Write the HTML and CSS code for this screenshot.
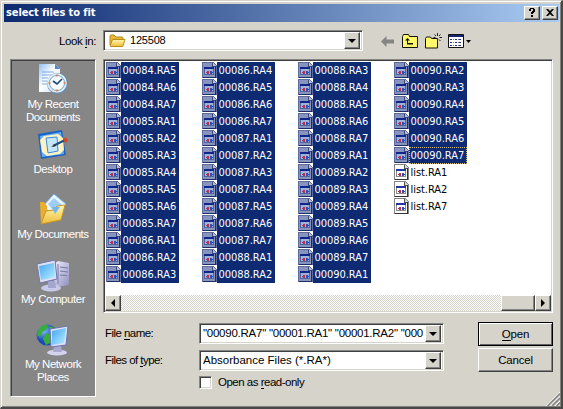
FILE: index.html
```html
<!DOCTYPE html>
<html lang="en">
<head>
<meta charset="utf-8">
<title>select files to fit</title>
<link rel="stylesheet" href="styles.css">
</head>
<body>
<svg class="defs" width="0" height="0" aria-hidden="true">
  <defs>
    <linearGradient id="gold" x1="0" y1="0" x2="0" y2="1"><stop offset="0" stop-color="#fff8b8"/><stop offset="1" stop-color="#eebc35"/></linearGradient>
    <linearGradient id="screen" x1="0" y1="0" x2="1" y2="1"><stop offset="0" stop-color="#46a5f5"/><stop offset="1" stop-color="#b5f0ff"/></linearGradient>
    <linearGradient id="paper" x1="0" y1="0" x2="1" y2="1"><stop offset="0" stop-color="#8fc0f4"/><stop offset=".45" stop-color="#fff"/><stop offset="1" stop-color="#c3defa"/></linearGradient>
    <radialGradient id="globe" cx=".35" cy=".3"><stop offset="0" stop-color="#7db8ff"/><stop offset="1" stop-color="#1747b8"/></radialGradient>
    <linearGradient id="case" x1="0" y1="0" x2="1" y2="1"><stop offset="0" stop-color="#f0f0fc"/><stop offset="1" stop-color="#8e8ebc"/></linearGradient>
    <symbol id="file" viewBox="0 0 15 17">
      <path class="sheet" d="M.5.5h10.500l3 3v12H.5z"/>
      <path class="fold" d="M10.500.500v3.500h3.500"/>
      <path class="edge" d="M13.500 4v11.500H.5"/>
      <path class="win" d="M2.500 5.500h9v7h-9z"/>
      <path class="bar" d="M2 5h10v2H2z"/>
      <path d="M4 10h1V9h2v3H5v-1H4z" fill="#b83050"/>
      <path d="M8 9h2v1h1v1h-1v1H8z" fill="#2452b8"/>
    </symbol>
  </defs>
</svg>
<main class="dialog">
  <header class="title"><span class="caption">select files to fit</span>
    <button class="tb">
      <svg width="14" height="12" viewBox="0 0 14 12"><path d="M4 2h1V1h4v1h1v3H9v1H8v1H6V5h1V4h1V2H6v2H4zM6 8h2v2H6z"/></svg></button>
    <button class="tb close">
      <svg width="14" height="12" viewBox="0 0 14 12"><path d="M3 2h2l2 2 2-2h2L8 5.500 11 9H9L7 7 5 9H3l3-3.500z"/></svg></button>
  </header>

  <div class="lookin">
    <label class="look-label">Look <u>i</u>n:</label>
    <div class="combo look">
      <svg class="folder" width="17" height="14" viewBox="0 0 17 14"><path d="M1 11V2q0-1 1-1h3l2 2h6q1 0 1 1v7z" fill="#e8b830" stroke="#b58a1e"/><path d="M3.500 5.500h12.500l-2.200 7H2q-1 0-.8-1z" fill="url(#gold)" stroke="#b88d20"/></svg>
      <span class="value">125508</span><span class="drop"></span>
    </div>
    <div class="tools">
      <svg width="13" height="11" viewBox="0 0 13 11"><path d="M0 5.500 5.500 0v3.500H13v4H5.500V11z" fill="#858585"/></svg>
      <svg width="16" height="14" viewBox="0 0 16 14"><path d="M.5 13.500v-11l1-2h5l1 2h8v11z" fill="#fff86a" stroke="#111"/><path d="M3 6.500 5.500 4 8 6.500H6V9h5v1.500H5v-4z" fill="#111"/></svg>
      <svg width="17" height="16" viewBox="0 0 17 16"><path d="M.5 15V5.500l1-1.500h4l1 1.500h6V15z" fill="#fff86a" stroke="#111"/><path d="M12.500 0v3M12.500 6v3M8.500 4.500h2M14.500 4.500H17M9.500 1.500l1.500 1.500M15.500 1.500 14 3M14 6.500 15.500 8" stroke="#222" fill="none"/></svg>
      <svg width="24" height="14" viewBox="0 0 24 14"><path d="M.5.5h15v13H.5z" fill="#fff" stroke="#111"/><path d="M1 1h14v2H1z" fill="#16246f"/><path d="M2 5h2v1H2zM7 5h2v1H7zM11 5h2v1h-2zM2 8h2v1H2zM7 8h2v1H7zM11 8h2v1h-2zM2 11h2v1H2zM7 11h2v1H7zM11 11h2v1h-2z" fill="#203090"/><path d="M5 5h1v1H5zM10 5h1v1h-1zM5 8h1v1H5zM10 8h1v1h-1zM5 11h1v1H5zM10 11h1v1h-1z" fill="#777"/><path d="M18 6h5l-2.500 3z" fill="#000"/></svg>
    </div>
  </div>

  <div class="body">
    <nav class="places">
      <a class="place recent">
        <svg width="32" height="32" viewBox="0 0 32 32"><path d="M2 1h16l5 5v23H2z" fill="url(#paper)"/><path d="M18 1v5h5z" fill="#4c87d2"/><path d="M5 9h12M5 12h10M5 15h6M5 18h5M5 21h5" stroke="#7ea9df"/><circle cx="20.500" cy="20.500" r="10.500" fill="#688aae"/><circle cx="20" cy="20" r="9.800" fill="#dcecf8"/><circle cx="20" cy="20" r="7.600" fill="#f5fbff" stroke="#7fa3c7"/><path d="m16 18 4 3 5-5" fill="none" stroke="#1c4a80" stroke-width="1.700"/><path d="M20 11.500v2M20 26.500v2M11.500 20h2M26.500 20h2" stroke="#e57936" stroke-width="1.500"/></svg>
        <span>My Recent<br>Documents</span></a>
      <a class="place desk">
        <svg width="32" height="32" viewBox="0 0 32 32"><path d="m1 5 24-4 4 25-25 4z" fill="#1c63c8"/><path d="m3 7 21-4 3 22-22 3z" fill="#63aef6"/><path d="m7 7 14-2 5 4 1 12-4 4-13 2-5-4L3 11z" fill="#fff3c1"/><path d="m9 9 11-1 1 14-10 2z" fill="#c6e6ff" stroke="#398bd9"/><path d="m16 17 12-6" stroke="#164f92" stroke-width="2"/><path d="m14 18 4-3 1 2z" fill="#333"/><path d="m27 12 3-2" stroke="#d54524" stroke-width="4"/></svg>
        <span>Desktop</span></a>
      <a class="place docs">
        <svg width="32" height="32" viewBox="0 0 32 32"><path d="m6 13 11-12 12 10-9 15z" fill="#eaf7ff" stroke="#72ade4"/><path d="m11 11 6-6 8 7-5 10z" fill="#9dcdf8"/><path d="M3 9h4l3 4v17l-6 1z" fill="#e9af2c"/><path d="m4 31 5-13 8-1 3-4 8-1-4 15z" fill="url(#gold)" stroke="#c8942a"/><path d="m15 14 8 0-5 7z" fill="#71b7f1"/></svg>
        <span>My Documents</span></a>
      <a class="place comp">
        <svg width="34" height="32" viewBox="0 0 34 32"><path d="m18 4 4-3 11 2v22l-12 2-3-5z" fill="url(#case)"/><path d="M22 4v20M24 7l8 1M24 11l8 1M24 15l7 .5" stroke="#7777a8"/><ellipse cx="15" cy="28" rx="10" ry="3.500" fill="#c9c9e9"/><path d="M12 21h7l1 7h-8z" fill="#a5a5cf"/><path d="m1 4 18-4 2 19-17 4z" fill="#dedff5" stroke="#7376ac"/><path d="m3 6 15-3 1 14-14 3z" fill="url(#screen)"/></svg>
        <span>My Computer</span></a>
      <a class="place net">
        <svg width="34" height="32" viewBox="0 0 34 32"><circle cx="11" cy="11" r="10.500" fill="url(#globe)"/><path d="M3 5q4-5 9-4l-2 5-4 2-2 5-3-2zM10 9l5 2-1 8-4 2-3-6zM14 2l5 2-2 5-4-2z" fill="#39ae35"/><ellipse cx="21" cy="28.500" rx="10" ry="3" fill="#d4d3ef"/><path d="M18 22h7l1 6h-9z" fill="#a9a9d2"/><path d="m14 5 18-3-2 19-15 2z" fill="#dce0f8" stroke="#6c72a9"/><path d="m16 7 14-3-2 15-12 2z" fill="url(#screen)"/></svg>
        <span>My Network<br>Places</span></a>
    </nav>

    <section class="right">
      <div class="list">
        <div class="columns" id="columns"></div>
        <div class="scroll"><button class="sb"><i class="tri left"></i></button><span class="track"></span><span class="thumb"></span><button class="sb"><i class="tri rgt"></i></button></div>
      </div>
      <div class="form">
        <div class="fields">
          <label>File <u>n</u>ame:</label>
          <div class="combo"><span class="value names">"00090.RA7" "00001.RA1" "00001.RA2" "000</span><span class="drop"></span></div>
          <label>Files of <u>t</u>ype:</label>
          <div class="combo"><span class="value">Absorbance Files (*.RA*)</span><span class="drop"></span></div>
        </div>
        <div class="actions"><button class="btn default"><span><u>O</u>pen</span></button><button class="btn">Cancel</button></div>
      </div>
      <label class="readonly"><span class="box"></span><span>Open as <u>r</u>ead-only</span></label>
    </section>
  </div>
  <svg class="grip" width="14" height="14" viewBox="0 0 14 14"><path d="M0 14 14 0M4.500 14 14 4.500M9 14l5-5" stroke="#fff"/><path d="M1.500 14 14 1.500M6 14l8-8M10.500 14l3.500-3.500" stroke="#858585" stroke-width="1.600"/></svg>
</main>
<script src="script.js"></script>
</body>
</html>
```
FILE: styles.css
```css
* { box-sizing: border-box; }
body { margin: 0; width: 563px; height: 409px; overflow: hidden; background: #d6d3cb; font: 11.5px/13px "Liberation Sans", Arial, sans-serif; color: #000; }
button { font: inherit; color: inherit; padding: 0; margin: 0; }
svg { display: block; flex: none; }
u { text-decoration: none; box-shadow: 0 1px #000; }
.defs { position: absolute; }
.dialog { position: relative; width: 563px; height: 409px; padding: 3px 2px 0 3px; background: #d6d3cb; border: 1px solid #d6d3cb; border-right: 2px solid #484848; border-bottom: 2px solid #484848; box-shadow: inset 1px 1px #fff, inset -1px -1px #85827c; }

.title { display: flex; align-items: center; height: 18px; width: 555px; padding-right: 1px; background: linear-gradient(90deg, #0d2a70, #a9cbf2); }
.caption { flex: 1; padding-left: 2px; font: bold 11px/16px "DejaVu Sans Condensed", "DejaVu Sans", sans-serif; letter-spacing: -.1px; color: #fff; }
.tb { width: 16px; height: 14px; background: #d6d3cb; border: 1px solid; border-color: #fff #404040 #404040 #fff; box-shadow: inset -1px -1px #858585; }
.close { margin-left: 2px; }

.lookin { display: flex; height: 37px; padding-top: 8px; }
.look-label { width: 99px; padding: 5px 7px 0 0; text-align: right; letter-spacing: -.4px; }
.combo { display: flex; align-items: center; height: 21px; padding: 2px; background: #fff; border: 1px solid; border-color: #858585 #fff #fff #858585; box-shadow: inset 1px 1px #404040, inset -1px -1px #d6d3cb; }
.look { width: 260px; }
.folder { margin-left: 3px; }
.value { flex: 1; min-width: 0; padding-left: 1px; overflow: hidden; white-space: nowrap; }
.look .value { padding-left: 4px; font-size: 11px; letter-spacing: -.2px; }
.drop { flex: none; display: grid; place-items: center; width: 16px; height: 17px; background: #d6d3cb; border: 1px solid; border-color: #fff #404040 #404040 #fff; box-shadow: inset -1px -1px #858585; }
.drop::after { content: ""; border: 4px solid transparent; border-top-color: #000; border-bottom: 0; }
.tools { display: flex; align-items: center; height: 22px; padding-left: 18px; gap: 7px; }
.tools svg:nth-child(1) { margin-right: 1px; }
.tools svg:nth-child(3) { margin-right: -1px; }

.body { display: flex; gap: 7px; padding-left: 6px; }
.places { display: flex; flex-direction: column; width: 86px; height: 338px; background: #868686; border: 1px solid; border-color: #858585 #fff #fff #858585; box-shadow: inset 1px 1px #404040; }
.place { display: flex; flex-direction: column; align-items: center; text-align: center; color: #fff; letter-spacing: -.45px; }
.place span { width: 100%; }
.recent { padding-top: 3px; height: 67px; }
.recent span { padding-top: 3px; }
.desk { height: 65px; padding-top: 2px; }
.desk span { padding-top: 2px; }
.docs { height: 67px; padding-top: 1px; }
.docs span { padding-top: 3px; }
.comp { height: 64px; padding-top: 1px; }
.comp span { padding-top: 1px; }
.net { padding-top: 1px; }
.net span { padding-top: 2px; }

.right { width: 450px; }
.list { height: 254px; background: #fff; border: 1px solid; border-color: #858585 #fff #fff #858585; box-shadow: inset 1px 1px #404040, inset -1px -1px #d6d3cb; padding: 1px; }
.columns { display: grid; grid-template-columns: repeat(4, 96px); height: 234px; padding: 1px 0 0 1px; font: 11px/17px "DejaVu Sans Condensed", "DejaVu Sans", sans-serif; letter-spacing: -.05px; }
.row { display: flex; height: 17px; }
.row svg { width: 15px; height: 17px; shape-rendering: crispEdges; }
.row span { padding: 0 2px 0 1.5px; height: 17px; white-space: nowrap; }
.selected span { width: 58px; color: #fff; background: #0d2a73; }
.focused span { outline: 1px dotted #d8bd6c; outline-offset: -1px; }
.sheet { fill: #fff; stroke: #858585; }
.fold { fill: #d5d5d5; stroke: #555; }
.edge { fill: none; stroke: #333; }
.win { fill: #fff; stroke: #8a8a8a; }
.bar { fill: #2436a0; }
.selected .sheet { fill: #8794bd; stroke: #5c6b99; }
.selected .fold { fill: #b4bddb; stroke: #3a4a80; }
.selected .edge { stroke: #1b2f66; }
.selected .win { fill: #a5b0d8; stroke: #5064a0; }
.selected .bar { fill: #10268c; }
.scroll { display: flex; height: 16px; }
.track { flex: 1; background: repeating-conic-gradient(#fff 0 25%, #d6d3cb 0 50%) 0 0 / 2px 2px; }
.sb, .thumb { background: #d6d3cb; border: 1px solid; border-color: #fff #404040 #404040 #fff; box-shadow: inset -1px -1px #858585; }
.sb { display: grid; place-items: center; width: 16px; }
.thumb { width: 34px; }
.tri { border: 4px solid transparent; }
.left { border-right-color: #000; border-left: 0; }
.rgt { border-left-color: #000; border-right: 0; }

.form { display: flex; justify-content: space-between; padding: 9px 0 0 2px; }
.fields { display: grid; grid-template-columns: 94px 245px; grid-auto-rows: 21px; row-gap: 6px; padding-top: 1px; }
.fields label { padding-top: 4px; letter-spacing: -.55px; }
.names { letter-spacing: -.25px; }
.actions { display: flex; flex-direction: column; gap: 2px; width: 75px; }
.btn { height: 24px; letter-spacing: -.2px; background: #d6d3cb; border: 1px solid; border-color: #fff #404040 #404040 #fff; box-shadow: inset -1px -1px #858585; }
.default { border-color: #000; box-shadow: inset 1px 1px #fff, inset -1px -1px #606060; }
.readonly { display: flex; align-items: center; gap: 6px; margin: 4px 0 0 96px; letter-spacing: -.5px; }
.box { width: 13px; height: 13px; background: #fff; border: 1px solid; border-color: #858585 #fff #fff #858585; box-shadow: inset 1px 1px #404040, inset -1px -1px #d6d3cb; }
.grip { position: absolute; right: 1px; bottom: 1px; }
```
FILE: script.js
```js
const ranges = [
  [["00084", 5, 7], ["00085", 1, 7], ["00086", 1, 3]],
  [["00086", 4, 7], ["00087", 1, 7], ["00088", 1, 2]],
  [["00088", 3, 7], ["00089", 1, 7], ["00090", 1, 1]],
  [["00090", 2, 7], ["list", 1, 2], ["list", 7, 7]]
];
const icon = document.querySelector("#file").innerHTML;
document.querySelector("#columns").innerHTML = ranges.map(col =>
  "<div>" + col.map(([name, from, to]) => {
    let rows = "";
    for (let n = from; n <= to; n++) {
      const file = `${name}.RA${n}`;
      const state = (name !== "list" ? " selected" : "") + (file === "00090.RA7" ? " focused" : "");
      rows += `<div class="row${state}"><svg viewBox="0 0 15 17">${icon}</svg><span>${file}</span></div>`;
    }
    return rows;
  }).join("") + "</div>").join("");
```
